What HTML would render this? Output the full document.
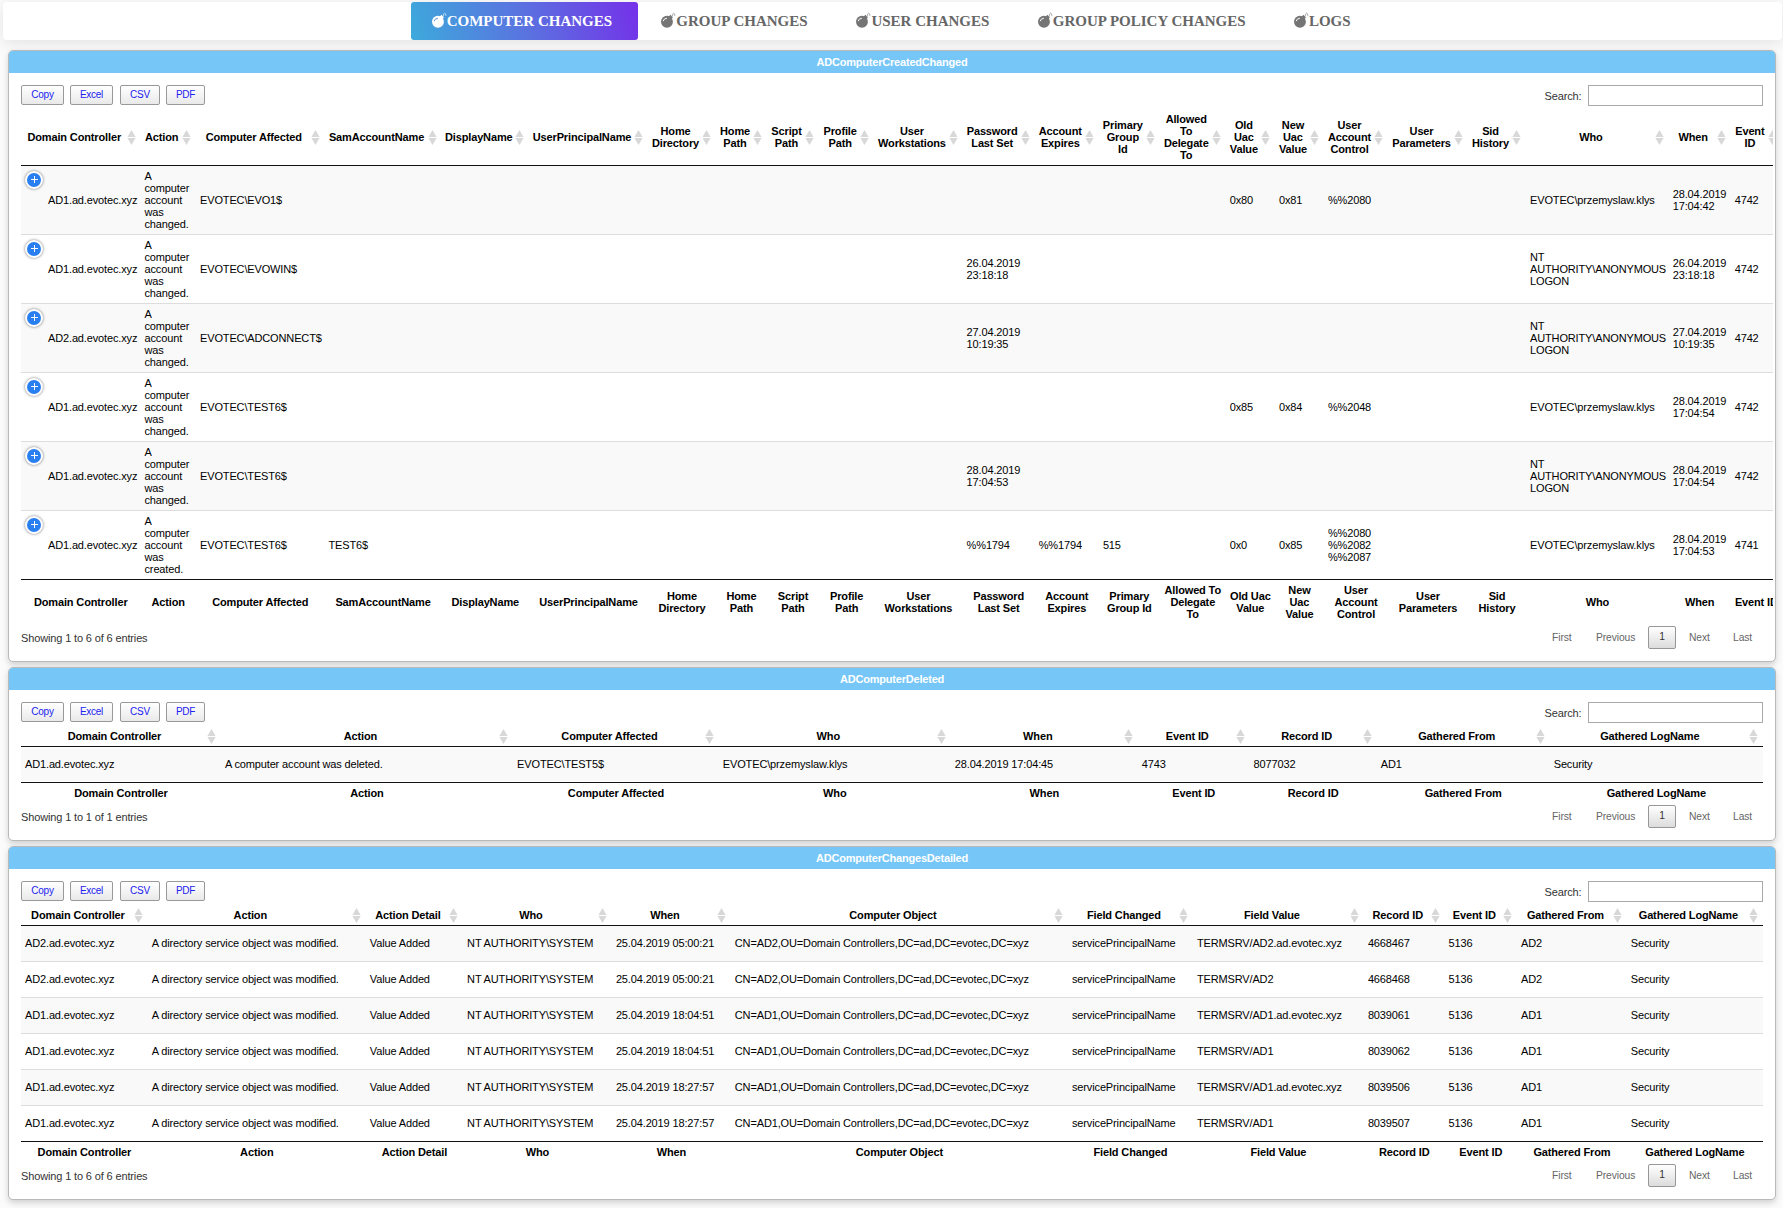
<!DOCTYPE html><html><head><meta charset="utf-8"><style>
*{box-sizing:border-box}
html,body{margin:0;padding:0;width:1783px;height:1208px;overflow:hidden;background:#fbfbfb;font-family:"Liberation Sans", sans-serif;font-size:11px;color:#000;position:relative}
.nav{position:absolute;left:3px;top:2px;width:1779px;height:38px;background:#fff;border-radius:4px;box-shadow:0 3px 16px rgba(0,0,0,0.1)}
.tab{position:absolute;top:2px;height:38px;font-family:"Liberation Serif",serif;font-weight:bold;font-size:15px;color:#666;white-space:nowrap}
.tab span{position:absolute;top:11px;line-height:17px}
.act{background:linear-gradient(72deg,#3daadb 0%,#5a72e0 50%,#7530e9 100%);border-radius:3px;color:#fff}
.panel{position:absolute;left:8px;width:1768px;background:#fff;border:1px solid #b9b9b9;border-radius:5px;box-shadow:0 3px 6px rgba(0,0,0,0.17)}
.phead{position:absolute;left:0;top:0;right:0;height:22px;background:#76c6f7;border-radius:4px 4px 0 0;color:#fff;font-weight:bold;text-align:center;line-height:22px;letter-spacing:-0.2px}
.btn{position:absolute;height:20px;border:1px solid #999;border-radius:2px;background:linear-gradient(#fff,#e9e9e9);color:#2222f0;font-size:10px;letter-spacing:-0.25px;text-align:center;line-height:18px;box-sizing:content-box;height:18px}
.srch{position:absolute;color:#333;line-height:12px;letter-spacing:-0.14px}
.inp{position:absolute;width:175px;height:21px;border:1px solid #a9a9a9;background:#fff}
.th{position:absolute;font-weight:bold;letter-spacing:-0.14px}
.th .lab{position:absolute;top:0;bottom:0;display:flex;align-items:center;justify-content:center;text-align:center;line-height:12px;white-space:nowrap}
.sa{display:block}
.td{position:absolute;display:flex;align-items:center;line-height:12px;white-space:nowrap;letter-spacing:-0.14px}
.ctrl{position:absolute;width:18px;height:18px;border-radius:9px;border:2px solid #fff;background:#2a7ff0;box-shadow:0 0 3px rgba(0,0,0,0.55)}
.ctrl:before{content:"";position:absolute;left:4px;top:6px;width:6.5px;height:1.1px;background:#fff}
.ctrl:after{content:"";position:absolute;left:6.9px;top:3px;width:1.1px;height:7px;background:#fff}
.info{position:absolute;color:#333;line-height:12px;letter-spacing:-0.14px}
.pg{position:absolute;color:#666;line-height:12px;font-size:10.3px;letter-spacing:-0.1px}
.cur{position:absolute;width:28px;height:23px;font-size:10.3px;border:1px solid #979797;border-radius:2px;background:linear-gradient(#fff,#dcdcdc);color:#333;text-align:center;line-height:20px}
</style></head><body>
<div class="nav"></div>
<div class="tab act" style="left:411px;width:227px"></div>
<svg style="position:absolute;left:430.7px;top:11px" width="17" height="17" viewBox="0 0 17 17"><circle cx="6.95" cy="10.8" r="5.95" fill="#fff"/><rect x="8.6" y="4.6" width="3.6" height="3.6" fill="#fff" transform="rotate(45 10.4 6.4)"/><path d="M12.2 5.4 Q12.6 2.0 13.7 2.1 Q14.8 2.2 14.9 4.9" stroke="#fff" stroke-width="0.8" fill="none" opacity="0.75"/><path d="M3.2 10.2 Q3.6 7.6 6.9 7.2" stroke="#5a8fe0" stroke-width="1" fill="none"/></svg>
<div class="tab" style="left:446.7px;color:#fff"><span>COMPUTER CHANGES</span></div>
<svg style="position:absolute;left:660.3px;top:11px" width="17" height="17" viewBox="0 0 17 17"><circle cx="6.95" cy="10.8" r="5.95" fill="#757575"/><rect x="8.6" y="4.6" width="3.6" height="3.6" fill="#757575" transform="rotate(45 10.4 6.4)"/><path d="M12.2 5.4 Q12.6 2.0 13.7 2.1 Q14.8 2.2 14.9 4.9" stroke="#757575" stroke-width="0.8" fill="none" opacity="0.75"/><path d="M3.2 10.2 Q3.6 7.6 6.9 7.2" stroke="#fff" stroke-width="1" fill="none"/></svg>
<div class="tab" style="left:676.3px;color:#666"><span>GROUP CHANGES</span></div>
<svg style="position:absolute;left:855.4px;top:11px" width="17" height="17" viewBox="0 0 17 17"><circle cx="6.95" cy="10.8" r="5.95" fill="#757575"/><rect x="8.6" y="4.6" width="3.6" height="3.6" fill="#757575" transform="rotate(45 10.4 6.4)"/><path d="M12.2 5.4 Q12.6 2.0 13.7 2.1 Q14.8 2.2 14.9 4.9" stroke="#757575" stroke-width="0.8" fill="none" opacity="0.75"/><path d="M3.2 10.2 Q3.6 7.6 6.9 7.2" stroke="#fff" stroke-width="1" fill="none"/></svg>
<div class="tab" style="left:871.4px;color:#666"><span>USER CHANGES</span></div>
<svg style="position:absolute;left:1036.8px;top:11px" width="17" height="17" viewBox="0 0 17 17"><circle cx="6.95" cy="10.8" r="5.95" fill="#757575"/><rect x="8.6" y="4.6" width="3.6" height="3.6" fill="#757575" transform="rotate(45 10.4 6.4)"/><path d="M12.2 5.4 Q12.6 2.0 13.7 2.1 Q14.8 2.2 14.9 4.9" stroke="#757575" stroke-width="0.8" fill="none" opacity="0.75"/><path d="M3.2 10.2 Q3.6 7.6 6.9 7.2" stroke="#fff" stroke-width="1" fill="none"/></svg>
<div class="tab" style="left:1052.8px;color:#666"><span>GROUP POLICY CHANGES</span></div>
<svg style="position:absolute;left:1292.9px;top:11px" width="17" height="17" viewBox="0 0 17 17"><circle cx="6.95" cy="10.8" r="5.95" fill="#757575"/><rect x="8.6" y="4.6" width="3.6" height="3.6" fill="#757575" transform="rotate(45 10.4 6.4)"/><path d="M12.2 5.4 Q12.6 2.0 13.7 2.1 Q14.8 2.2 14.9 4.9" stroke="#757575" stroke-width="0.8" fill="none" opacity="0.75"/><path d="M3.2 10.2 Q3.6 7.6 6.9 7.2" stroke="#fff" stroke-width="1" fill="none"/></svg>
<div class="tab" style="left:1308.9px;color:#666"><span>LOGS</span></div>
<div class="panel" style="top:50px;height:612px"><div class="phead">ADComputerCreatedChanged</div></div>
<div class="btn" style="left:21px;top:85px;width:41px">Copy</div>
<div class="btn" style="left:70px;top:85px;width:41px">Excel</div>
<div class="btn" style="left:120px;top:85px;width:38px">CSV</div>
<div class="btn" style="left:166px;top:85px;width:37px">PDF</div>
<div class="srch" style="left:1544.5px;top:90px">Search:</div>
<div class="inp" style="left:1588px;top:85px"></div>
<div style="position:absolute;left:21px;top:109px;width:1752px;height:515px;overflow:hidden">
<div class="th" style="left:0px;top:0px;width:119.5px;height:56px"><div class="lab" style="left:4px;right:17px">Domain Controller</div><div style="position:absolute;right:5px;top:21.0px"><svg class="sa" width="9" height="16" viewBox="0 0 9 16"><path d="M4.5 0 L8.6 6.9 L0.4 6.9 Z" fill="#d8d8d8"/><path d="M0.4 8.1 L8.6 8.1 L4.5 15 Z" fill="#d8d8d8"/></svg></div></div>
<div class="th" style="left:119.5px;top:0px;width:55.5px;height:56px"><div class="lab" style="left:4px;right:17px">Action</div><div style="position:absolute;right:5px;top:21.0px"><svg class="sa" width="9" height="16" viewBox="0 0 9 16"><path d="M4.5 0 L8.6 6.9 L0.4 6.9 Z" fill="#d8d8d8"/><path d="M0.4 8.1 L8.6 8.1 L4.5 15 Z" fill="#d8d8d8"/></svg></div></div>
<div class="th" style="left:175px;top:0px;width:128.5px;height:56px"><div class="lab" style="left:4px;right:17px">Computer Affected</div><div style="position:absolute;right:5px;top:21.0px"><svg class="sa" width="9" height="16" viewBox="0 0 9 16"><path d="M4.5 0 L8.6 6.9 L0.4 6.9 Z" fill="#d8d8d8"/><path d="M0.4 8.1 L8.6 8.1 L4.5 15 Z" fill="#d8d8d8"/></svg></div></div>
<div class="th" style="left:303.5px;top:0px;width:117.0px;height:56px"><div class="lab" style="left:4px;right:17px">SamAccountName</div><div style="position:absolute;right:5px;top:21.0px"><svg class="sa" width="9" height="16" viewBox="0 0 9 16"><path d="M4.5 0 L8.6 6.9 L0.4 6.9 Z" fill="#d8d8d8"/><path d="M0.4 8.1 L8.6 8.1 L4.5 15 Z" fill="#d8d8d8"/></svg></div></div>
<div class="th" style="left:420.5px;top:0px;width:87.5px;height:56px"><div class="lab" style="left:4px;right:17px">DisplayName</div><div style="position:absolute;right:5px;top:21.0px"><svg class="sa" width="9" height="16" viewBox="0 0 9 16"><path d="M4.5 0 L8.6 6.9 L0.4 6.9 Z" fill="#d8d8d8"/><path d="M0.4 8.1 L8.6 8.1 L4.5 15 Z" fill="#d8d8d8"/></svg></div></div>
<div class="th" style="left:508px;top:0px;width:119px;height:56px"><div class="lab" style="left:4px;right:17px">UserPrincipalName</div><div style="position:absolute;right:5px;top:21.0px"><svg class="sa" width="9" height="16" viewBox="0 0 9 16"><path d="M4.5 0 L8.6 6.9 L0.4 6.9 Z" fill="#d8d8d8"/><path d="M0.4 8.1 L8.6 8.1 L4.5 15 Z" fill="#d8d8d8"/></svg></div></div>
<div class="th" style="left:627px;top:0px;width:68px;height:56px"><div class="lab" style="left:4px;right:17px">Home<br>Directory</div><div style="position:absolute;right:5px;top:21.0px"><svg class="sa" width="9" height="16" viewBox="0 0 9 16"><path d="M4.5 0 L8.6 6.9 L0.4 6.9 Z" fill="#d8d8d8"/><path d="M0.4 8.1 L8.6 8.1 L4.5 15 Z" fill="#d8d8d8"/></svg></div></div>
<div class="th" style="left:695px;top:0px;width:51px;height:56px"><div class="lab" style="left:4px;right:17px">Home<br>Path</div><div style="position:absolute;right:5px;top:21.0px"><svg class="sa" width="9" height="16" viewBox="0 0 9 16"><path d="M4.5 0 L8.6 6.9 L0.4 6.9 Z" fill="#d8d8d8"/><path d="M0.4 8.1 L8.6 8.1 L4.5 15 Z" fill="#d8d8d8"/></svg></div></div>
<div class="th" style="left:746px;top:0px;width:52px;height:56px"><div class="lab" style="left:4px;right:17px">Script<br>Path</div><div style="position:absolute;right:5px;top:21.0px"><svg class="sa" width="9" height="16" viewBox="0 0 9 16"><path d="M4.5 0 L8.6 6.9 L0.4 6.9 Z" fill="#d8d8d8"/><path d="M0.4 8.1 L8.6 8.1 L4.5 15 Z" fill="#d8d8d8"/></svg></div></div>
<div class="th" style="left:798px;top:0px;width:55.299999999999955px;height:56px"><div class="lab" style="left:4px;right:17px">Profile<br>Path</div><div style="position:absolute;right:5px;top:21.0px"><svg class="sa" width="9" height="16" viewBox="0 0 9 16"><path d="M4.5 0 L8.6 6.9 L0.4 6.9 Z" fill="#d8d8d8"/><path d="M0.4 8.1 L8.6 8.1 L4.5 15 Z" fill="#d8d8d8"/></svg></div></div>
<div class="th" style="left:853.3px;top:0px;width:88.30000000000007px;height:56px"><div class="lab" style="left:4px;right:17px">User<br>Workstations</div><div style="position:absolute;right:5px;top:21.0px"><svg class="sa" width="9" height="16" viewBox="0 0 9 16"><path d="M4.5 0 L8.6 6.9 L0.4 6.9 Z" fill="#d8d8d8"/><path d="M0.4 8.1 L8.6 8.1 L4.5 15 Z" fill="#d8d8d8"/></svg></div></div>
<div class="th" style="left:941.6px;top:0px;width:72.10000000000002px;height:56px"><div class="lab" style="left:4px;right:17px">Password<br>Last Set</div><div style="position:absolute;right:5px;top:21.0px"><svg class="sa" width="9" height="16" viewBox="0 0 9 16"><path d="M4.5 0 L8.6 6.9 L0.4 6.9 Z" fill="#d8d8d8"/><path d="M0.4 8.1 L8.6 8.1 L4.5 15 Z" fill="#d8d8d8"/></svg></div></div>
<div class="th" style="left:1013.7px;top:0px;width:64.20000000000005px;height:56px"><div class="lab" style="left:4px;right:17px">Account<br>Expires</div><div style="position:absolute;right:5px;top:21.0px"><svg class="sa" width="9" height="16" viewBox="0 0 9 16"><path d="M4.5 0 L8.6 6.9 L0.4 6.9 Z" fill="#d8d8d8"/><path d="M0.4 8.1 L8.6 8.1 L4.5 15 Z" fill="#d8d8d8"/></svg></div></div>
<div class="th" style="left:1077.9px;top:0px;width:60.899999999999864px;height:56px"><div class="lab" style="left:4px;right:17px">Primary<br>Group<br>Id</div><div style="position:absolute;right:5px;top:21.0px"><svg class="sa" width="9" height="16" viewBox="0 0 9 16"><path d="M4.5 0 L8.6 6.9 L0.4 6.9 Z" fill="#d8d8d8"/><path d="M0.4 8.1 L8.6 8.1 L4.5 15 Z" fill="#d8d8d8"/></svg></div></div>
<div class="th" style="left:1138.8px;top:0px;width:65.90000000000009px;height:56px"><div class="lab" style="left:4px;right:17px">Allowed<br>To<br>Delegate<br>To</div><div style="position:absolute;right:5px;top:21.0px"><svg class="sa" width="9" height="16" viewBox="0 0 9 16"><path d="M4.5 0 L8.6 6.9 L0.4 6.9 Z" fill="#d8d8d8"/><path d="M0.4 8.1 L8.6 8.1 L4.5 15 Z" fill="#d8d8d8"/></svg></div></div>
<div class="th" style="left:1204.7px;top:0px;width:49.299999999999955px;height:56px"><div class="lab" style="left:4px;right:17px">Old<br>Uac<br>Value</div><div style="position:absolute;right:5px;top:21.0px"><svg class="sa" width="9" height="16" viewBox="0 0 9 16"><path d="M4.5 0 L8.6 6.9 L0.4 6.9 Z" fill="#d8d8d8"/><path d="M0.4 8.1 L8.6 8.1 L4.5 15 Z" fill="#d8d8d8"/></svg></div></div>
<div class="th" style="left:1254px;top:0px;width:48.90000000000009px;height:56px"><div class="lab" style="left:4px;right:17px">New<br>Uac<br>Value</div><div style="position:absolute;right:5px;top:21.0px"><svg class="sa" width="9" height="16" viewBox="0 0 9 16"><path d="M4.5 0 L8.6 6.9 L0.4 6.9 Z" fill="#d8d8d8"/><path d="M0.4 8.1 L8.6 8.1 L4.5 15 Z" fill="#d8d8d8"/></svg></div></div>
<div class="th" style="left:1302.9px;top:0px;width:64.19999999999982px;height:56px"><div class="lab" style="left:4px;right:17px">User<br>Account<br>Control</div><div style="position:absolute;right:5px;top:21.0px"><svg class="sa" width="9" height="16" viewBox="0 0 9 16"><path d="M4.5 0 L8.6 6.9 L0.4 6.9 Z" fill="#d8d8d8"/><path d="M0.4 8.1 L8.6 8.1 L4.5 15 Z" fill="#d8d8d8"/></svg></div></div>
<div class="th" style="left:1367.1px;top:0px;width:79.90000000000009px;height:56px"><div class="lab" style="left:4px;right:17px">User<br>Parameters</div><div style="position:absolute;right:5px;top:21.0px"><svg class="sa" width="9" height="16" viewBox="0 0 9 16"><path d="M4.5 0 L8.6 6.9 L0.4 6.9 Z" fill="#d8d8d8"/><path d="M0.4 8.1 L8.6 8.1 L4.5 15 Z" fill="#d8d8d8"/></svg></div></div>
<div class="th" style="left:1447px;top:0px;width:58px;height:56px"><div class="lab" style="left:4px;right:17px">Sid<br>History</div><div style="position:absolute;right:5px;top:21.0px"><svg class="sa" width="9" height="16" viewBox="0 0 9 16"><path d="M4.5 0 L8.6 6.9 L0.4 6.9 Z" fill="#d8d8d8"/><path d="M0.4 8.1 L8.6 8.1 L4.5 15 Z" fill="#d8d8d8"/></svg></div></div>
<div class="th" style="left:1505px;top:0px;width:142.70000000000005px;height:56px"><div class="lab" style="left:4px;right:17px">Who</div><div style="position:absolute;right:5px;top:21.0px"><svg class="sa" width="9" height="16" viewBox="0 0 9 16"><path d="M4.5 0 L8.6 6.9 L0.4 6.9 Z" fill="#d8d8d8"/><path d="M0.4 8.1 L8.6 8.1 L4.5 15 Z" fill="#d8d8d8"/></svg></div></div>
<div class="th" style="left:1647.7px;top:0px;width:62.0px;height:56px"><div class="lab" style="left:4px;right:17px">When</div><div style="position:absolute;right:5px;top:21.0px"><svg class="sa" width="9" height="16" viewBox="0 0 9 16"><path d="M4.5 0 L8.6 6.9 L0.4 6.9 Z" fill="#d8d8d8"/><path d="M0.4 8.1 L8.6 8.1 L4.5 15 Z" fill="#d8d8d8"/></svg></div></div>
<div class="th" style="left:1709.7px;top:0px;width:51.299999999999955px;height:56px"><div class="lab" style="left:4px;right:17px">Event<br>ID</div><div style="position:absolute;right:5px;top:21.0px"><svg class="sa" width="9" height="16" viewBox="0 0 9 16"><path d="M4.5 0 L8.6 6.9 L0.4 6.9 Z" fill="#d8d8d8"/><path d="M0.4 8.1 L8.6 8.1 L4.5 15 Z" fill="#d8d8d8"/></svg></div></div>
<div style="position:absolute;left:0;top:56px;width:1761px;height:1px;background:#111"></div>
<div style="position:absolute;left:0;top:57px;width:1761px;height:68px;background:#f9f9f9"></div>
<div class="td" style="left:27px;top:57px;height:68px;padding-bottom:0px">AD1.ad.evotec.xyz</div>
<div class="td" style="left:123.5px;top:57px;height:68px;padding-bottom:0px">A<br>computer<br>account<br>was<br>changed.</div>
<div class="td" style="left:179px;top:57px;height:68px;padding-bottom:0px">EVOTEC\EVO1$</div>
<div class="td" style="left:1208.7px;top:57px;height:68px;padding-bottom:0px">0x80</div>
<div class="td" style="left:1258px;top:57px;height:68px;padding-bottom:0px">0x81</div>
<div class="td" style="left:1306.9px;top:57px;height:68px;padding-bottom:0px">%%2080</div>
<div class="td" style="left:1509px;top:57px;height:68px;padding-bottom:0px">EVOTEC\przemyslaw.klys</div>
<div class="td" style="left:1651.7px;top:57px;height:68px;padding-bottom:0px">28.04.2019<br>17:04:42</div>
<div class="td" style="left:1713.7px;top:57px;height:68px;padding-bottom:0px">4742</div>
<div class="ctrl" style="left:4px;top:62px"></div>
<div style="position:absolute;left:0;top:125px;width:1761px;height:1px;background:#ddd"></div>
<div style="position:absolute;left:0;top:126px;width:1761px;height:68px;background:#fff"></div>
<div class="td" style="left:27px;top:126px;height:68px;padding-bottom:0px">AD1.ad.evotec.xyz</div>
<div class="td" style="left:123.5px;top:126px;height:68px;padding-bottom:0px">A<br>computer<br>account<br>was<br>changed.</div>
<div class="td" style="left:179px;top:126px;height:68px;padding-bottom:0px">EVOTEC\EVOWIN$</div>
<div class="td" style="left:945.6px;top:126px;height:68px;padding-bottom:0px">26.04.2019<br>23:18:18</div>
<div class="td" style="left:1509px;top:126px;height:68px;padding-bottom:0px">NT<br>AUTHORITY\ANONYMOUS<br>LOGON</div>
<div class="td" style="left:1651.7px;top:126px;height:68px;padding-bottom:0px">26.04.2019<br>23:18:18</div>
<div class="td" style="left:1713.7px;top:126px;height:68px;padding-bottom:0px">4742</div>
<div class="ctrl" style="left:4px;top:131px"></div>
<div style="position:absolute;left:0;top:194px;width:1761px;height:1px;background:#ddd"></div>
<div style="position:absolute;left:0;top:195px;width:1761px;height:68px;background:#f9f9f9"></div>
<div class="td" style="left:27px;top:195px;height:68px;padding-bottom:0px">AD2.ad.evotec.xyz</div>
<div class="td" style="left:123.5px;top:195px;height:68px;padding-bottom:0px">A<br>computer<br>account<br>was<br>changed.</div>
<div class="td" style="left:179px;top:195px;height:68px;padding-bottom:0px">EVOTEC\ADCONNECT$</div>
<div class="td" style="left:945.6px;top:195px;height:68px;padding-bottom:0px">27.04.2019<br>10:19:35</div>
<div class="td" style="left:1509px;top:195px;height:68px;padding-bottom:0px">NT<br>AUTHORITY\ANONYMOUS<br>LOGON</div>
<div class="td" style="left:1651.7px;top:195px;height:68px;padding-bottom:0px">27.04.2019<br>10:19:35</div>
<div class="td" style="left:1713.7px;top:195px;height:68px;padding-bottom:0px">4742</div>
<div class="ctrl" style="left:4px;top:200px"></div>
<div style="position:absolute;left:0;top:263px;width:1761px;height:1px;background:#ddd"></div>
<div style="position:absolute;left:0;top:264px;width:1761px;height:68px;background:#fff"></div>
<div class="td" style="left:27px;top:264px;height:68px;padding-bottom:0px">AD1.ad.evotec.xyz</div>
<div class="td" style="left:123.5px;top:264px;height:68px;padding-bottom:0px">A<br>computer<br>account<br>was<br>changed.</div>
<div class="td" style="left:179px;top:264px;height:68px;padding-bottom:0px">EVOTEC\TEST6$</div>
<div class="td" style="left:1208.7px;top:264px;height:68px;padding-bottom:0px">0x85</div>
<div class="td" style="left:1258px;top:264px;height:68px;padding-bottom:0px">0x84</div>
<div class="td" style="left:1306.9px;top:264px;height:68px;padding-bottom:0px">%%2048</div>
<div class="td" style="left:1509px;top:264px;height:68px;padding-bottom:0px">EVOTEC\przemyslaw.klys</div>
<div class="td" style="left:1651.7px;top:264px;height:68px;padding-bottom:0px">28.04.2019<br>17:04:54</div>
<div class="td" style="left:1713.7px;top:264px;height:68px;padding-bottom:0px">4742</div>
<div class="ctrl" style="left:4px;top:269px"></div>
<div style="position:absolute;left:0;top:332px;width:1761px;height:1px;background:#ddd"></div>
<div style="position:absolute;left:0;top:333px;width:1761px;height:68px;background:#f9f9f9"></div>
<div class="td" style="left:27px;top:333px;height:68px;padding-bottom:0px">AD1.ad.evotec.xyz</div>
<div class="td" style="left:123.5px;top:333px;height:68px;padding-bottom:0px">A<br>computer<br>account<br>was<br>changed.</div>
<div class="td" style="left:179px;top:333px;height:68px;padding-bottom:0px">EVOTEC\TEST6$</div>
<div class="td" style="left:945.6px;top:333px;height:68px;padding-bottom:0px">28.04.2019<br>17:04:53</div>
<div class="td" style="left:1509px;top:333px;height:68px;padding-bottom:0px">NT<br>AUTHORITY\ANONYMOUS<br>LOGON</div>
<div class="td" style="left:1651.7px;top:333px;height:68px;padding-bottom:0px">28.04.2019<br>17:04:54</div>
<div class="td" style="left:1713.7px;top:333px;height:68px;padding-bottom:0px">4742</div>
<div class="ctrl" style="left:4px;top:338px"></div>
<div style="position:absolute;left:0;top:401px;width:1761px;height:1px;background:#ddd"></div>
<div style="position:absolute;left:0;top:402px;width:1761px;height:68px;background:#fff"></div>
<div class="td" style="left:27px;top:402px;height:68px;padding-bottom:0px">AD1.ad.evotec.xyz</div>
<div class="td" style="left:123.5px;top:402px;height:68px;padding-bottom:0px">A<br>computer<br>account<br>was<br>created.</div>
<div class="td" style="left:179px;top:402px;height:68px;padding-bottom:0px">EVOTEC\TEST6$</div>
<div class="td" style="left:307.5px;top:402px;height:68px;padding-bottom:0px">TEST6$</div>
<div class="td" style="left:945.6px;top:402px;height:68px;padding-bottom:0px">%%1794</div>
<div class="td" style="left:1017.7px;top:402px;height:68px;padding-bottom:0px">%%1794</div>
<div class="td" style="left:1081.9px;top:402px;height:68px;padding-bottom:0px">515</div>
<div class="td" style="left:1208.7px;top:402px;height:68px;padding-bottom:0px">0x0</div>
<div class="td" style="left:1258px;top:402px;height:68px;padding-bottom:0px">0x85</div>
<div class="td" style="left:1306.9px;top:402px;height:68px;padding-bottom:0px">%%2080<br>%%2082<br>%%2087</div>
<div class="td" style="left:1509px;top:402px;height:68px;padding-bottom:0px">EVOTEC\przemyslaw.klys</div>
<div class="td" style="left:1651.7px;top:402px;height:68px;padding-bottom:0px">28.04.2019<br>17:04:53</div>
<div class="td" style="left:1713.7px;top:402px;height:68px;padding-bottom:0px">4741</div>
<div class="ctrl" style="left:4px;top:407px"></div>
<div style="position:absolute;left:0;top:470px;width:1761px;height:1px;background:#111"></div>
<div class="th" style="left:0px;top:471px;width:119.5px;height:44px"><div class="lab" style="left:4px;right:4px;padding-bottom:0px">Domain Controller</div></div>
<div class="th" style="left:119.5px;top:471px;width:55.5px;height:44px"><div class="lab" style="left:4px;right:4px;padding-bottom:0px">Action</div></div>
<div class="th" style="left:175px;top:471px;width:128.5px;height:44px"><div class="lab" style="left:4px;right:4px;padding-bottom:0px">Computer Affected</div></div>
<div class="th" style="left:303.5px;top:471px;width:117.0px;height:44px"><div class="lab" style="left:4px;right:4px;padding-bottom:0px">SamAccountName</div></div>
<div class="th" style="left:420.5px;top:471px;width:87.5px;height:44px"><div class="lab" style="left:4px;right:4px;padding-bottom:0px">DisplayName</div></div>
<div class="th" style="left:508px;top:471px;width:119px;height:44px"><div class="lab" style="left:4px;right:4px;padding-bottom:0px">UserPrincipalName</div></div>
<div class="th" style="left:627px;top:471px;width:68px;height:44px"><div class="lab" style="left:4px;right:4px;padding-bottom:0px">Home<br>Directory</div></div>
<div class="th" style="left:695px;top:471px;width:51px;height:44px"><div class="lab" style="left:4px;right:4px;padding-bottom:0px">Home<br>Path</div></div>
<div class="th" style="left:746px;top:471px;width:52px;height:44px"><div class="lab" style="left:4px;right:4px;padding-bottom:0px">Script<br>Path</div></div>
<div class="th" style="left:798px;top:471px;width:55.299999999999955px;height:44px"><div class="lab" style="left:4px;right:4px;padding-bottom:0px">Profile<br>Path</div></div>
<div class="th" style="left:853.3px;top:471px;width:88.30000000000007px;height:44px"><div class="lab" style="left:4px;right:4px;padding-bottom:0px">User<br>Workstations</div></div>
<div class="th" style="left:941.6px;top:471px;width:72.10000000000002px;height:44px"><div class="lab" style="left:4px;right:4px;padding-bottom:0px">Password<br>Last Set</div></div>
<div class="th" style="left:1013.7px;top:471px;width:64.20000000000005px;height:44px"><div class="lab" style="left:4px;right:4px;padding-bottom:0px">Account<br>Expires</div></div>
<div class="th" style="left:1077.9px;top:471px;width:60.899999999999864px;height:44px"><div class="lab" style="left:4px;right:4px;padding-bottom:0px">Primary<br>Group Id</div></div>
<div class="th" style="left:1138.8px;top:471px;width:65.90000000000009px;height:44px"><div class="lab" style="left:4px;right:4px;padding-bottom:0px">Allowed To<br>Delegate<br>To</div></div>
<div class="th" style="left:1204.7px;top:471px;width:49.299999999999955px;height:44px"><div class="lab" style="left:4px;right:4px;padding-bottom:0px">Old Uac<br>Value</div></div>
<div class="th" style="left:1254px;top:471px;width:48.90000000000009px;height:44px"><div class="lab" style="left:4px;right:4px;padding-bottom:0px">New<br>Uac<br>Value</div></div>
<div class="th" style="left:1302.9px;top:471px;width:64.19999999999982px;height:44px"><div class="lab" style="left:4px;right:4px;padding-bottom:0px">User<br>Account<br>Control</div></div>
<div class="th" style="left:1367.1px;top:471px;width:79.90000000000009px;height:44px"><div class="lab" style="left:4px;right:4px;padding-bottom:0px">User<br>Parameters</div></div>
<div class="th" style="left:1447px;top:471px;width:58px;height:44px"><div class="lab" style="left:4px;right:4px;padding-bottom:0px">Sid<br>History</div></div>
<div class="th" style="left:1505px;top:471px;width:142.70000000000005px;height:44px"><div class="lab" style="left:4px;right:4px;padding-bottom:0px">Who</div></div>
<div class="th" style="left:1647.7px;top:471px;width:62.0px;height:44px"><div class="lab" style="left:4px;right:4px;padding-bottom:0px">When</div></div>
<div class="th" style="left:1709.7px;top:471px;width:51.299999999999955px;height:44px"><div class="lab" style="left:4px;right:4px;padding-bottom:0px">Event ID</div></div>
</div>
<div class="info" style="left:21px;top:632px">Showing 1 to 6 of 6 entries</div>
<div class="pg" style="left:1552px;top:632px">First</div>
<div class="pg" style="left:1596px;top:632px">Previous</div>
<div class="cur" style="left:1648px;top:626px">1</div>
<div class="pg" style="left:1689px;top:632px">Next</div>
<div class="pg" style="left:1733px;top:632px">Last</div>
<div class="panel" style="top:667px;height:174px"><div class="phead">ADComputerDeleted</div></div>
<div class="btn" style="left:21px;top:702px;width:41px">Copy</div>
<div class="btn" style="left:70px;top:702px;width:41px">Excel</div>
<div class="btn" style="left:120px;top:702px;width:38px">CSV</div>
<div class="btn" style="left:166px;top:702px;width:37px">PDF</div>
<div class="srch" style="left:1544.5px;top:707px">Search:</div>
<div class="inp" style="left:1588px;top:702px"></div>
<div style="position:absolute;left:21px;top:725px;width:1741.9px;height:79px;overflow:hidden">
<div class="th" style="left:0px;top:0px;width:199.9px;height:21px"><div class="lab" style="left:4px;right:17px">Domain Controller</div><div style="position:absolute;right:5px;top:3.5px"><svg class="sa" width="9" height="16" viewBox="0 0 9 16"><path d="M4.5 0 L8.6 6.9 L0.4 6.9 Z" fill="#d8d8d8"/><path d="M0.4 8.1 L8.6 8.1 L4.5 15 Z" fill="#d8d8d8"/></svg></div></div>
<div class="th" style="left:199.9px;top:0px;width:292.20000000000005px;height:21px"><div class="lab" style="left:4px;right:17px">Action</div><div style="position:absolute;right:5px;top:3.5px"><svg class="sa" width="9" height="16" viewBox="0 0 9 16"><path d="M4.5 0 L8.6 6.9 L0.4 6.9 Z" fill="#d8d8d8"/><path d="M0.4 8.1 L8.6 8.1 L4.5 15 Z" fill="#d8d8d8"/></svg></div></div>
<div class="th" style="left:492.1px;top:0px;width:205.69999999999993px;height:21px"><div class="lab" style="left:4px;right:17px">Computer Affected</div><div style="position:absolute;right:5px;top:3.5px"><svg class="sa" width="9" height="16" viewBox="0 0 9 16"><path d="M4.5 0 L8.6 6.9 L0.4 6.9 Z" fill="#d8d8d8"/><path d="M0.4 8.1 L8.6 8.1 L4.5 15 Z" fill="#d8d8d8"/></svg></div></div>
<div class="th" style="left:697.8px;top:0px;width:232.0px;height:21px"><div class="lab" style="left:4px;right:17px">Who</div><div style="position:absolute;right:5px;top:3.5px"><svg class="sa" width="9" height="16" viewBox="0 0 9 16"><path d="M4.5 0 L8.6 6.9 L0.4 6.9 Z" fill="#d8d8d8"/><path d="M0.4 8.1 L8.6 8.1 L4.5 15 Z" fill="#d8d8d8"/></svg></div></div>
<div class="th" style="left:929.8px;top:0px;width:187.0px;height:21px"><div class="lab" style="left:4px;right:17px">When</div><div style="position:absolute;right:5px;top:3.5px"><svg class="sa" width="9" height="16" viewBox="0 0 9 16"><path d="M4.5 0 L8.6 6.9 L0.4 6.9 Z" fill="#d8d8d8"/><path d="M0.4 8.1 L8.6 8.1 L4.5 15 Z" fill="#d8d8d8"/></svg></div></div>
<div class="th" style="left:1116.8px;top:0px;width:111.79999999999995px;height:21px"><div class="lab" style="left:4px;right:17px">Event ID</div><div style="position:absolute;right:5px;top:3.5px"><svg class="sa" width="9" height="16" viewBox="0 0 9 16"><path d="M4.5 0 L8.6 6.9 L0.4 6.9 Z" fill="#d8d8d8"/><path d="M0.4 8.1 L8.6 8.1 L4.5 15 Z" fill="#d8d8d8"/></svg></div></div>
<div class="th" style="left:1228.6px;top:0px;width:127.10000000000014px;height:21px"><div class="lab" style="left:4px;right:17px">Record ID</div><div style="position:absolute;right:5px;top:3.5px"><svg class="sa" width="9" height="16" viewBox="0 0 9 16"><path d="M4.5 0 L8.6 6.9 L0.4 6.9 Z" fill="#d8d8d8"/><path d="M0.4 8.1 L8.6 8.1 L4.5 15 Z" fill="#d8d8d8"/></svg></div></div>
<div class="th" style="left:1355.7px;top:0px;width:173.0px;height:21px"><div class="lab" style="left:4px;right:17px">Gathered From</div><div style="position:absolute;right:5px;top:3.5px"><svg class="sa" width="9" height="16" viewBox="0 0 9 16"><path d="M4.5 0 L8.6 6.9 L0.4 6.9 Z" fill="#d8d8d8"/><path d="M0.4 8.1 L8.6 8.1 L4.5 15 Z" fill="#d8d8d8"/></svg></div></div>
<div class="th" style="left:1528.7px;top:0px;width:213.20000000000005px;height:21px"><div class="lab" style="left:4px;right:17px">Gathered LogName</div><div style="position:absolute;right:5px;top:3.5px"><svg class="sa" width="9" height="16" viewBox="0 0 9 16"><path d="M4.5 0 L8.6 6.9 L0.4 6.9 Z" fill="#d8d8d8"/><path d="M0.4 8.1 L8.6 8.1 L4.5 15 Z" fill="#d8d8d8"/></svg></div></div>
<div style="position:absolute;left:0;top:21px;width:1741.9px;height:1px;background:#111"></div>
<div style="position:absolute;left:0;top:23px;width:1741.9px;height:33px;background:#f9f9f9"></div>
<div class="td" style="left:4px;top:23px;height:33px;padding-bottom:1px">AD1.ad.evotec.xyz</div>
<div class="td" style="left:203.9px;top:23px;height:33px;padding-bottom:1px">A computer account was deleted.</div>
<div class="td" style="left:496.1px;top:23px;height:33px;padding-bottom:1px">EVOTEC\TEST5$</div>
<div class="td" style="left:701.8px;top:23px;height:33px;padding-bottom:1px">EVOTEC\przemyslaw.klys</div>
<div class="td" style="left:933.8px;top:23px;height:33px;padding-bottom:1px">28.04.2019 17:04:45</div>
<div class="td" style="left:1120.8px;top:23px;height:33px;padding-bottom:1px">4743</div>
<div class="td" style="left:1232.6px;top:23px;height:33px;padding-bottom:1px">8077032</div>
<div class="td" style="left:1359.7px;top:23px;height:33px;padding-bottom:1px">AD1</div>
<div class="td" style="left:1532.7px;top:23px;height:33px;padding-bottom:1px">Security</div>
<div style="position:absolute;left:0;top:57px;width:1741.9px;height:1px;background:#111"></div>
<div class="th" style="left:0px;top:58px;width:199.9px;height:21px"><div class="lab" style="left:4px;right:4px;padding-bottom:1px">Domain Controller</div></div>
<div class="th" style="left:199.9px;top:58px;width:292.20000000000005px;height:21px"><div class="lab" style="left:4px;right:4px;padding-bottom:1px">Action</div></div>
<div class="th" style="left:492.1px;top:58px;width:205.69999999999993px;height:21px"><div class="lab" style="left:4px;right:4px;padding-bottom:1px">Computer Affected</div></div>
<div class="th" style="left:697.8px;top:58px;width:232.0px;height:21px"><div class="lab" style="left:4px;right:4px;padding-bottom:1px">Who</div></div>
<div class="th" style="left:929.8px;top:58px;width:187.0px;height:21px"><div class="lab" style="left:4px;right:4px;padding-bottom:1px">When</div></div>
<div class="th" style="left:1116.8px;top:58px;width:111.79999999999995px;height:21px"><div class="lab" style="left:4px;right:4px;padding-bottom:1px">Event ID</div></div>
<div class="th" style="left:1228.6px;top:58px;width:127.10000000000014px;height:21px"><div class="lab" style="left:4px;right:4px;padding-bottom:1px">Record ID</div></div>
<div class="th" style="left:1355.7px;top:58px;width:173.0px;height:21px"><div class="lab" style="left:4px;right:4px;padding-bottom:1px">Gathered From</div></div>
<div class="th" style="left:1528.7px;top:58px;width:213.20000000000005px;height:21px"><div class="lab" style="left:4px;right:4px;padding-bottom:1px">Gathered LogName</div></div>
</div>
<div class="info" style="left:21px;top:811px">Showing 1 to 1 of 1 entries</div>
<div class="pg" style="left:1552px;top:811px">First</div>
<div class="pg" style="left:1596px;top:811px">Previous</div>
<div class="cur" style="left:1648px;top:805px">1</div>
<div class="pg" style="left:1689px;top:811px">Next</div>
<div class="pg" style="left:1733px;top:811px">Last</div>
<div class="panel" style="top:846px;height:354px"><div class="phead">ADComputerChangesDetailed</div></div>
<div class="btn" style="left:21px;top:881px;width:41px">Copy</div>
<div class="btn" style="left:70px;top:881px;width:41px">Excel</div>
<div class="btn" style="left:120px;top:881px;width:38px">CSV</div>
<div class="btn" style="left:166px;top:881px;width:37px">PDF</div>
<div class="srch" style="left:1544.5px;top:886px">Search:</div>
<div class="inp" style="left:1588px;top:881px"></div>
<div style="position:absolute;left:21px;top:904px;width:1741.9px;height:259px;overflow:hidden">
<div class="th" style="left:0px;top:0px;width:126.80000000000001px;height:21px"><div class="lab" style="left:4px;right:17px">Domain Controller</div><div style="position:absolute;right:5px;top:3.5px"><svg class="sa" width="9" height="16" viewBox="0 0 9 16"><path d="M4.5 0 L8.6 6.9 L0.4 6.9 Z" fill="#d8d8d8"/><path d="M0.4 8.1 L8.6 8.1 L4.5 15 Z" fill="#d8d8d8"/></svg></div></div>
<div class="th" style="left:126.80000000000001px;top:0px;width:218.0px;height:21px"><div class="lab" style="left:4px;right:17px">Action</div><div style="position:absolute;right:5px;top:3.5px"><svg class="sa" width="9" height="16" viewBox="0 0 9 16"><path d="M4.5 0 L8.6 6.9 L0.4 6.9 Z" fill="#d8d8d8"/><path d="M0.4 8.1 L8.6 8.1 L4.5 15 Z" fill="#d8d8d8"/></svg></div></div>
<div class="th" style="left:344.8px;top:0px;width:97.30000000000001px;height:21px"><div class="lab" style="left:4px;right:17px">Action Detail</div><div style="position:absolute;right:5px;top:3.5px"><svg class="sa" width="9" height="16" viewBox="0 0 9 16"><path d="M4.5 0 L8.6 6.9 L0.4 6.9 Z" fill="#d8d8d8"/><path d="M0.4 8.1 L8.6 8.1 L4.5 15 Z" fill="#d8d8d8"/></svg></div></div>
<div class="th" style="left:442.1px;top:0px;width:148.79999999999995px;height:21px"><div class="lab" style="left:4px;right:17px">Who</div><div style="position:absolute;right:5px;top:3.5px"><svg class="sa" width="9" height="16" viewBox="0 0 9 16"><path d="M4.5 0 L8.6 6.9 L0.4 6.9 Z" fill="#d8d8d8"/><path d="M0.4 8.1 L8.6 8.1 L4.5 15 Z" fill="#d8d8d8"/></svg></div></div>
<div class="th" style="left:590.9px;top:0px;width:118.89999999999998px;height:21px"><div class="lab" style="left:4px;right:17px">When</div><div style="position:absolute;right:5px;top:3.5px"><svg class="sa" width="9" height="16" viewBox="0 0 9 16"><path d="M4.5 0 L8.6 6.9 L0.4 6.9 Z" fill="#d8d8d8"/><path d="M0.4 8.1 L8.6 8.1 L4.5 15 Z" fill="#d8d8d8"/></svg></div></div>
<div class="th" style="left:709.8px;top:0px;width:337.20000000000005px;height:21px"><div class="lab" style="left:4px;right:17px">Computer Object</div><div style="position:absolute;right:5px;top:3.5px"><svg class="sa" width="9" height="16" viewBox="0 0 9 16"><path d="M4.5 0 L8.6 6.9 L0.4 6.9 Z" fill="#d8d8d8"/><path d="M0.4 8.1 L8.6 8.1 L4.5 15 Z" fill="#d8d8d8"/></svg></div></div>
<div class="th" style="left:1047px;top:0px;width:124.90000000000009px;height:21px"><div class="lab" style="left:4px;right:17px">Field Changed</div><div style="position:absolute;right:5px;top:3.5px"><svg class="sa" width="9" height="16" viewBox="0 0 9 16"><path d="M4.5 0 L8.6 6.9 L0.4 6.9 Z" fill="#d8d8d8"/><path d="M0.4 8.1 L8.6 8.1 L4.5 15 Z" fill="#d8d8d8"/></svg></div></div>
<div class="th" style="left:1171.9px;top:0px;width:171.0px;height:21px"><div class="lab" style="left:4px;right:17px">Field Value</div><div style="position:absolute;right:5px;top:3.5px"><svg class="sa" width="9" height="16" viewBox="0 0 9 16"><path d="M4.5 0 L8.6 6.9 L0.4 6.9 Z" fill="#d8d8d8"/><path d="M0.4 8.1 L8.6 8.1 L4.5 15 Z" fill="#d8d8d8"/></svg></div></div>
<div class="th" style="left:1342.9px;top:0px;width:80.69999999999982px;height:21px"><div class="lab" style="left:4px;right:17px">Record ID</div><div style="position:absolute;right:5px;top:3.5px"><svg class="sa" width="9" height="16" viewBox="0 0 9 16"><path d="M4.5 0 L8.6 6.9 L0.4 6.9 Z" fill="#d8d8d8"/><path d="M0.4 8.1 L8.6 8.1 L4.5 15 Z" fill="#d8d8d8"/></svg></div></div>
<div class="th" style="left:1423.6px;top:0px;width:72.40000000000009px;height:21px"><div class="lab" style="left:4px;right:17px">Event ID</div><div style="position:absolute;right:5px;top:3.5px"><svg class="sa" width="9" height="16" viewBox="0 0 9 16"><path d="M4.5 0 L8.6 6.9 L0.4 6.9 Z" fill="#d8d8d8"/><path d="M0.4 8.1 L8.6 8.1 L4.5 15 Z" fill="#d8d8d8"/></svg></div></div>
<div class="th" style="left:1496px;top:0px;width:109.79999999999995px;height:21px"><div class="lab" style="left:4px;right:17px">Gathered From</div><div style="position:absolute;right:5px;top:3.5px"><svg class="sa" width="9" height="16" viewBox="0 0 9 16"><path d="M4.5 0 L8.6 6.9 L0.4 6.9 Z" fill="#d8d8d8"/><path d="M0.4 8.1 L8.6 8.1 L4.5 15 Z" fill="#d8d8d8"/></svg></div></div>
<div class="th" style="left:1605.8px;top:0px;width:136.10000000000014px;height:21px"><div class="lab" style="left:4px;right:17px">Gathered LogName</div><div style="position:absolute;right:5px;top:3.5px"><svg class="sa" width="9" height="16" viewBox="0 0 9 16"><path d="M4.5 0 L8.6 6.9 L0.4 6.9 Z" fill="#d8d8d8"/><path d="M0.4 8.1 L8.6 8.1 L4.5 15 Z" fill="#d8d8d8"/></svg></div></div>
<div style="position:absolute;left:0;top:21px;width:1741.9px;height:1px;background:#111"></div>
<div style="position:absolute;left:0;top:22px;width:1741.9px;height:35px;background:#f9f9f9"></div>
<div class="td" style="left:4px;top:22px;height:35px;padding-bottom:1px">AD2.ad.evotec.xyz</div>
<div class="td" style="left:130.8px;top:22px;height:35px;padding-bottom:1px">A directory service object was modified.</div>
<div class="td" style="left:348.8px;top:22px;height:35px;padding-bottom:1px">Value Added</div>
<div class="td" style="left:446.1px;top:22px;height:35px;padding-bottom:1px">NT AUTHORITY\SYSTEM</div>
<div class="td" style="left:594.9px;top:22px;height:35px;padding-bottom:1px">25.04.2019 05:00:21</div>
<div class="td" style="left:713.8px;top:22px;height:35px;padding-bottom:1px">CN=AD2,OU=Domain Controllers,DC=ad,DC=evotec,DC=xyz</div>
<div class="td" style="left:1051px;top:22px;height:35px;padding-bottom:1px">servicePrincipalName</div>
<div class="td" style="left:1175.9px;top:22px;height:35px;padding-bottom:1px">TERMSRV/AD2.ad.evotec.xyz</div>
<div class="td" style="left:1346.9px;top:22px;height:35px;padding-bottom:1px">4668467</div>
<div class="td" style="left:1427.6px;top:22px;height:35px;padding-bottom:1px">5136</div>
<div class="td" style="left:1500px;top:22px;height:35px;padding-bottom:1px">AD2</div>
<div class="td" style="left:1609.8px;top:22px;height:35px;padding-bottom:1px">Security</div>
<div style="position:absolute;left:0;top:57px;width:1741.9px;height:1px;background:#ddd"></div>
<div style="position:absolute;left:0;top:58px;width:1741.9px;height:35px;background:#fff"></div>
<div class="td" style="left:4px;top:58px;height:35px;padding-bottom:1px">AD2.ad.evotec.xyz</div>
<div class="td" style="left:130.8px;top:58px;height:35px;padding-bottom:1px">A directory service object was modified.</div>
<div class="td" style="left:348.8px;top:58px;height:35px;padding-bottom:1px">Value Added</div>
<div class="td" style="left:446.1px;top:58px;height:35px;padding-bottom:1px">NT AUTHORITY\SYSTEM</div>
<div class="td" style="left:594.9px;top:58px;height:35px;padding-bottom:1px">25.04.2019 05:00:21</div>
<div class="td" style="left:713.8px;top:58px;height:35px;padding-bottom:1px">CN=AD2,OU=Domain Controllers,DC=ad,DC=evotec,DC=xyz</div>
<div class="td" style="left:1051px;top:58px;height:35px;padding-bottom:1px">servicePrincipalName</div>
<div class="td" style="left:1175.9px;top:58px;height:35px;padding-bottom:1px">TERMSRV/AD2</div>
<div class="td" style="left:1346.9px;top:58px;height:35px;padding-bottom:1px">4668468</div>
<div class="td" style="left:1427.6px;top:58px;height:35px;padding-bottom:1px">5136</div>
<div class="td" style="left:1500px;top:58px;height:35px;padding-bottom:1px">AD2</div>
<div class="td" style="left:1609.8px;top:58px;height:35px;padding-bottom:1px">Security</div>
<div style="position:absolute;left:0;top:93px;width:1741.9px;height:1px;background:#ddd"></div>
<div style="position:absolute;left:0;top:94px;width:1741.9px;height:35px;background:#f9f9f9"></div>
<div class="td" style="left:4px;top:94px;height:35px;padding-bottom:1px">AD1.ad.evotec.xyz</div>
<div class="td" style="left:130.8px;top:94px;height:35px;padding-bottom:1px">A directory service object was modified.</div>
<div class="td" style="left:348.8px;top:94px;height:35px;padding-bottom:1px">Value Added</div>
<div class="td" style="left:446.1px;top:94px;height:35px;padding-bottom:1px">NT AUTHORITY\SYSTEM</div>
<div class="td" style="left:594.9px;top:94px;height:35px;padding-bottom:1px">25.04.2019 18:04:51</div>
<div class="td" style="left:713.8px;top:94px;height:35px;padding-bottom:1px">CN=AD1,OU=Domain Controllers,DC=ad,DC=evotec,DC=xyz</div>
<div class="td" style="left:1051px;top:94px;height:35px;padding-bottom:1px">servicePrincipalName</div>
<div class="td" style="left:1175.9px;top:94px;height:35px;padding-bottom:1px">TERMSRV/AD1.ad.evotec.xyz</div>
<div class="td" style="left:1346.9px;top:94px;height:35px;padding-bottom:1px">8039061</div>
<div class="td" style="left:1427.6px;top:94px;height:35px;padding-bottom:1px">5136</div>
<div class="td" style="left:1500px;top:94px;height:35px;padding-bottom:1px">AD1</div>
<div class="td" style="left:1609.8px;top:94px;height:35px;padding-bottom:1px">Security</div>
<div style="position:absolute;left:0;top:129px;width:1741.9px;height:1px;background:#ddd"></div>
<div style="position:absolute;left:0;top:130px;width:1741.9px;height:35px;background:#fff"></div>
<div class="td" style="left:4px;top:130px;height:35px;padding-bottom:1px">AD1.ad.evotec.xyz</div>
<div class="td" style="left:130.8px;top:130px;height:35px;padding-bottom:1px">A directory service object was modified.</div>
<div class="td" style="left:348.8px;top:130px;height:35px;padding-bottom:1px">Value Added</div>
<div class="td" style="left:446.1px;top:130px;height:35px;padding-bottom:1px">NT AUTHORITY\SYSTEM</div>
<div class="td" style="left:594.9px;top:130px;height:35px;padding-bottom:1px">25.04.2019 18:04:51</div>
<div class="td" style="left:713.8px;top:130px;height:35px;padding-bottom:1px">CN=AD1,OU=Domain Controllers,DC=ad,DC=evotec,DC=xyz</div>
<div class="td" style="left:1051px;top:130px;height:35px;padding-bottom:1px">servicePrincipalName</div>
<div class="td" style="left:1175.9px;top:130px;height:35px;padding-bottom:1px">TERMSRV/AD1</div>
<div class="td" style="left:1346.9px;top:130px;height:35px;padding-bottom:1px">8039062</div>
<div class="td" style="left:1427.6px;top:130px;height:35px;padding-bottom:1px">5136</div>
<div class="td" style="left:1500px;top:130px;height:35px;padding-bottom:1px">AD1</div>
<div class="td" style="left:1609.8px;top:130px;height:35px;padding-bottom:1px">Security</div>
<div style="position:absolute;left:0;top:165px;width:1741.9px;height:1px;background:#ddd"></div>
<div style="position:absolute;left:0;top:166px;width:1741.9px;height:35px;background:#f9f9f9"></div>
<div class="td" style="left:4px;top:166px;height:35px;padding-bottom:1px">AD1.ad.evotec.xyz</div>
<div class="td" style="left:130.8px;top:166px;height:35px;padding-bottom:1px">A directory service object was modified.</div>
<div class="td" style="left:348.8px;top:166px;height:35px;padding-bottom:1px">Value Added</div>
<div class="td" style="left:446.1px;top:166px;height:35px;padding-bottom:1px">NT AUTHORITY\SYSTEM</div>
<div class="td" style="left:594.9px;top:166px;height:35px;padding-bottom:1px">25.04.2019 18:27:57</div>
<div class="td" style="left:713.8px;top:166px;height:35px;padding-bottom:1px">CN=AD1,OU=Domain Controllers,DC=ad,DC=evotec,DC=xyz</div>
<div class="td" style="left:1051px;top:166px;height:35px;padding-bottom:1px">servicePrincipalName</div>
<div class="td" style="left:1175.9px;top:166px;height:35px;padding-bottom:1px">TERMSRV/AD1.ad.evotec.xyz</div>
<div class="td" style="left:1346.9px;top:166px;height:35px;padding-bottom:1px">8039506</div>
<div class="td" style="left:1427.6px;top:166px;height:35px;padding-bottom:1px">5136</div>
<div class="td" style="left:1500px;top:166px;height:35px;padding-bottom:1px">AD1</div>
<div class="td" style="left:1609.8px;top:166px;height:35px;padding-bottom:1px">Security</div>
<div style="position:absolute;left:0;top:201px;width:1741.9px;height:1px;background:#ddd"></div>
<div style="position:absolute;left:0;top:202px;width:1741.9px;height:35px;background:#fff"></div>
<div class="td" style="left:4px;top:202px;height:35px;padding-bottom:1px">AD1.ad.evotec.xyz</div>
<div class="td" style="left:130.8px;top:202px;height:35px;padding-bottom:1px">A directory service object was modified.</div>
<div class="td" style="left:348.8px;top:202px;height:35px;padding-bottom:1px">Value Added</div>
<div class="td" style="left:446.1px;top:202px;height:35px;padding-bottom:1px">NT AUTHORITY\SYSTEM</div>
<div class="td" style="left:594.9px;top:202px;height:35px;padding-bottom:1px">25.04.2019 18:27:57</div>
<div class="td" style="left:713.8px;top:202px;height:35px;padding-bottom:1px">CN=AD1,OU=Domain Controllers,DC=ad,DC=evotec,DC=xyz</div>
<div class="td" style="left:1051px;top:202px;height:35px;padding-bottom:1px">servicePrincipalName</div>
<div class="td" style="left:1175.9px;top:202px;height:35px;padding-bottom:1px">TERMSRV/AD1</div>
<div class="td" style="left:1346.9px;top:202px;height:35px;padding-bottom:1px">8039507</div>
<div class="td" style="left:1427.6px;top:202px;height:35px;padding-bottom:1px">5136</div>
<div class="td" style="left:1500px;top:202px;height:35px;padding-bottom:1px">AD1</div>
<div class="td" style="left:1609.8px;top:202px;height:35px;padding-bottom:1px">Security</div>
<div style="position:absolute;left:0;top:237px;width:1741.9px;height:1px;background:#111"></div>
<div class="th" style="left:0px;top:238px;width:126.80000000000001px;height:21px"><div class="lab" style="left:4px;right:4px;padding-bottom:1px">Domain Controller</div></div>
<div class="th" style="left:126.80000000000001px;top:238px;width:218.0px;height:21px"><div class="lab" style="left:4px;right:4px;padding-bottom:1px">Action</div></div>
<div class="th" style="left:344.8px;top:238px;width:97.30000000000001px;height:21px"><div class="lab" style="left:4px;right:4px;padding-bottom:1px">Action Detail</div></div>
<div class="th" style="left:442.1px;top:238px;width:148.79999999999995px;height:21px"><div class="lab" style="left:4px;right:4px;padding-bottom:1px">Who</div></div>
<div class="th" style="left:590.9px;top:238px;width:118.89999999999998px;height:21px"><div class="lab" style="left:4px;right:4px;padding-bottom:1px">When</div></div>
<div class="th" style="left:709.8px;top:238px;width:337.20000000000005px;height:21px"><div class="lab" style="left:4px;right:4px;padding-bottom:1px">Computer Object</div></div>
<div class="th" style="left:1047px;top:238px;width:124.90000000000009px;height:21px"><div class="lab" style="left:4px;right:4px;padding-bottom:1px">Field Changed</div></div>
<div class="th" style="left:1171.9px;top:238px;width:171.0px;height:21px"><div class="lab" style="left:4px;right:4px;padding-bottom:1px">Field Value</div></div>
<div class="th" style="left:1342.9px;top:238px;width:80.69999999999982px;height:21px"><div class="lab" style="left:4px;right:4px;padding-bottom:1px">Record ID</div></div>
<div class="th" style="left:1423.6px;top:238px;width:72.40000000000009px;height:21px"><div class="lab" style="left:4px;right:4px;padding-bottom:1px">Event ID</div></div>
<div class="th" style="left:1496px;top:238px;width:109.79999999999995px;height:21px"><div class="lab" style="left:4px;right:4px;padding-bottom:1px">Gathered From</div></div>
<div class="th" style="left:1605.8px;top:238px;width:136.10000000000014px;height:21px"><div class="lab" style="left:4px;right:4px;padding-bottom:1px">Gathered LogName</div></div>
</div>
<div class="info" style="left:21px;top:1170px">Showing 1 to 6 of 6 entries</div>
<div class="pg" style="left:1552px;top:1170px">First</div>
<div class="pg" style="left:1596px;top:1170px">Previous</div>
<div class="cur" style="left:1648px;top:1164px">1</div>
<div class="pg" style="left:1689px;top:1170px">Next</div>
<div class="pg" style="left:1733px;top:1170px">Last</div>
</body></html>
